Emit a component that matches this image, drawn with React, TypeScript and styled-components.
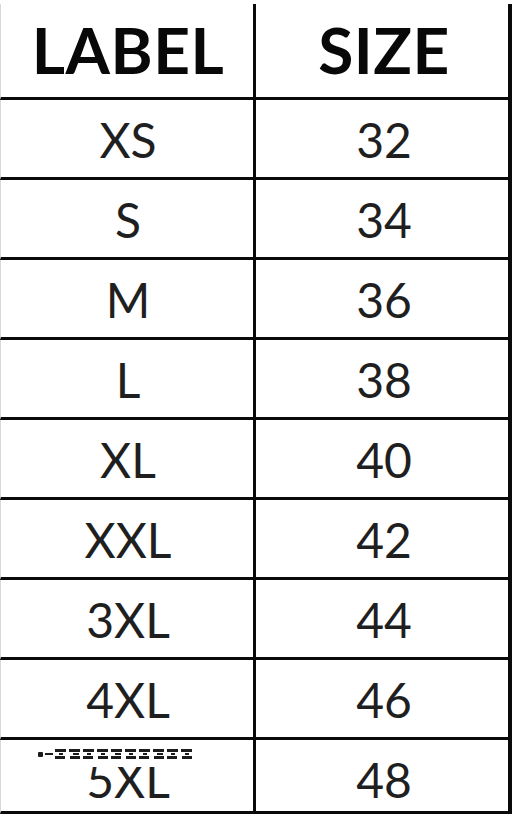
import React from "react";
import styled, { createGlobalStyle } from "styled-components";

const GlobalStyle = createGlobalStyle`
  html, body {
    margin: 0;
    padding: 0;
    background: #ffffff;
  }
  body {
    font-family: Lato, "Open Sans", "Liberation Sans", sans-serif;
  }
`;

const rows: [string, string][] = [
  ["XS", "32"],
  ["S", "34"],
  ["M", "36"],
  ["L", "38"],
  ["XL", "40"],
  ["XXL", "42"],
  ["3XL", "44"],
  ["4XL", "46"],
  ["5XL", "48"],
];

const App = () => {
  return (
    <>
      <GlobalStyle />
      <Chart>
        <Cell $head $first>LABEL</Cell>
        <Cell $head>SIZE</Cell>
        {rows.map(([label, size], i) => {
          const last = i === rows.length - 1;
          return (
            <React.Fragment key={label}>
              <Cell $first $last={last}>
                {label}
                {last && <Glitch />}
              </Cell>
              <Cell $last={last}>{size}</Cell>
            </React.Fragment>
          );
        })}
      </Chart>
    </>
  );
};

export default App;

// the scanned chart has a smudged strip over the top of "5XL"
const Glitch = () => (
  <Smudge>
    <svg width="162" height="10" viewBox="0 0 162 10">
      <g fill="#1c1c1c">
        <rect x="0" y="3" width="5" height="5" rx="1" />
        <rect x="7" y="4" width="8" height="2" />
        {[17, 31, 45, 59, 73, 87, 101, 115, 129, 143].map((x, k) => (
          <g key={x}>
            <rect x={x} y="0" width="11" height="3" />
            <rect x={x + 4} y="4" width={k % 3 === 1 ? 6 : 4} height="2" />
            <rect x={x + (k % 2 ? 1 : 0)} y="7" width="10" height="3" />
          </g>
        ))}
      </g>
    </svg>
  </Smudge>
);

const Chart = styled.div`
  width: 512px;
  height: 818px;
  box-sizing: border-box;
  padding-top: 4px;
  display: grid;
  grid-template-columns: 256px 256px;
  grid-template-rows: 96px repeat(8, 80px) 74px;
  align-content: start;
  color: #1d1d1d;
`;

const Cell = styled.div<{ $head?: boolean; $first?: boolean; $last?: boolean }>`
  position: relative;
  box-sizing: border-box;
  border-bottom: 3px solid #0a0a0a;
  border-right: ${(p) => (p.$first ? "3px" : "4px")} solid #0a0a0a;
  border-left: ${(p) => (p.$first ? "1px solid #d8d8d8" : "none")};
  padding-top: ${(p) => (p.$head ? "1px" : "2px")};
  padding-left: ${(p) => (p.$first ? "2px" : "4px")};
  text-align: center;
  font-size: ${(p) => (p.$head ? "64px" : "48px")};
  font-weight: ${(p) => (p.$head ? 700 : 400)};
  line-height: ${(p) => (p.$head ? "90px" : "75px")};
  color: ${(p) => (p.$head ? "#080808" : "#1f1f1f")};
  letter-spacing: ${(p) => (p.$head ? "0.5px" : "0")};
`;

const Smudge = styled.div`
  position: absolute;
  left: 0;
  right: 0;
  top: 0;
  height: 27px;
  background: #ffffff;
  display: flex;
  align-items: flex-end;
  padding-left: 37px;
  padding-bottom: 8px;
  box-sizing: border-box;
`;
